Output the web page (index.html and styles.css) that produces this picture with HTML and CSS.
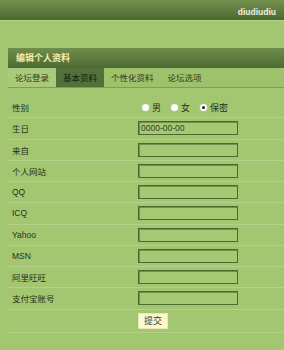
FILE: index.html
```html
<!DOCTYPE html>
<html>
<head>
<meta charset="utf-8">
<link rel="stylesheet" href="styles.css">
</head>
<body>
<div class="topbar"><span class="user">diudiudiu</span></div>
<div class="panel">
  <div class="panel-title">编辑个人资料</div>
  <div class="tabs">
    <span class="tab tab-first">论坛登录</span>
    <span class="tab tab-active">基本资料</span>
    <span class="tab">个性化资料</span>
    <span class="tab">论坛选项</span>
  </div>
  <div class="form">
    <div class="row">
      <div class="label">性别</div>
      <div class="field radios">
        <span class="radio-item"><span class="radio"></span>男</span>
        <span class="radio-item"><span class="radio"></span>女</span>
        <span class="radio-item"><span class="radio checked"></span>保密</span>
      </div>
    </div>
    <div class="row">
      <div class="label">生日</div>
      <div class="field"><span class="input">0000-00-00</span></div>
    </div>
    <div class="row">
      <div class="label">来自</div>
      <div class="field"><span class="input"></span></div>
    </div>
    <div class="row">
      <div class="label">个人网站</div>
      <div class="field"><span class="input"></span></div>
    </div>
    <div class="row">
      <div class="label">QQ</div>
      <div class="field"><span class="input"></span></div>
    </div>
    <div class="row">
      <div class="label">ICQ</div>
      <div class="field"><span class="input"></span></div>
    </div>
    <div class="row">
      <div class="label">Yahoo</div>
      <div class="field"><span class="input"></span></div>
    </div>
    <div class="row">
      <div class="label">MSN</div>
      <div class="field"><span class="input"></span></div>
    </div>
    <div class="row">
      <div class="label">阿里旺旺</div>
      <div class="field"><span class="input"></span></div>
    </div>
    <div class="row">
      <div class="label">支付宝账号</div>
      <div class="field"><span class="input"></span></div>
    </div>
    <div class="row row-submit">
      <div class="label"></div>
      <div class="field"><span class="button">提交</span></div>
    </div>
  </div>
</div>
</body>
</html>
```
FILE: styles.css
```css
html, body {
  margin: 0;
  padding: 0;
}
body {
  width: 284px;
  height: 350px;
  overflow: hidden;
  background: #a3c670;
  font-family: "Liberation Sans", "Noto Sans CJK SC", sans-serif;
  font-size: 9px;
  color: #26311c;
}
.topbar {
  height: 20px;
  border-bottom: 1px solid #b4d488;
  background: linear-gradient(#74924f, #4c6832);
  display: flex;
  align-items: center;
  justify-content: flex-end;
  padding-right: 8px;
}
.user {
  color: #eef4e2;
  font-weight: bold;
  font-size: 8.5px;
  margin-top: 4px;
}
.panel {
  margin: 27px 0 0 8px;
}
.panel-title {
  height: 20px;
  line-height: 20px;
  padding-left: 8px;
  background: linear-gradient(#6f8d4b, #4e6a33);
  color: #f4eeb0;
  font-weight: bold;
  font-size: 9px;
  font-family: "Noto Sans CJK SC", sans-serif;
}
.tabs {
  display: flex;
  height: 19px;
  border-bottom: 1px solid #7f9f58;
  background: #9ec16b;
}
.tab {
  line-height: 19px;
  padding: 0 7px;
  color: #2e3a22;
  font-family: "Noto Sans CJK SC", sans-serif;
  font-size: 8.5px;
}
.tab-first {
  background: #a9c97b;
}
.tab-active {
  background: #52703a;
  color: #15200c;
}
.form {
  padding-top: 9px;
}
.row {
  display: flex;
  align-items: center;
  height: 20.25px;
  border-bottom: 1px solid #b3d189;
}
.row-submit {
  height: 22px;
}
.label {
  width: 126px;
  padding-left: 4px;
  font-family: "Liberation Sans", "Noto Sans CJK SC", sans-serif;
  font-size: 8.5px;
}
.field {
  display: flex;
  align-items: center;
}
.radios {
  padding-left: 4px;
  gap: 10px;
}
.radio-item {
  display: flex;
  align-items: center;
  font-size: 9px;
  font-family: "Noto Sans CJK SC", sans-serif;
}
.radio {
  width: 7px;
  height: 7px;
  border-radius: 50%;
  background: radial-gradient(circle at 60% 60%, #ffffff 50%, #dfe6d4 100%);
  box-shadow: 0 0 0 0.5px #c4cfb6;
  margin-right: 3px;
  position: relative;
}
.radio.checked::after {
  content: "";
  position: absolute;
  left: 2px;
  top: 2px;
  width: 3px;
  height: 3px;
  border-radius: 50%;
  background: #1c1c1c;
}
.input {
  display: block;
  width: 96px;
  height: 12px;
  border: 1px solid #4b6a31;
  box-shadow: inset 1px 1px 0 #6f8f4c;
  background: #a5c872;
  font-size: 8.5px;
  line-height: 12px;
  padding-left: 2px;
  box-sizing: content-box;
  color: #34402a;
}
.button {
  display: block;
  width: 28px;
  height: 14px;
  line-height: 14px;
  text-align: center;
  background: #fdf9cf;
  border: 1px solid #efe7ad;
  color: #3a3a2a;
  font-size: 9px;
  font-family: "Noto Sans CJK SC", sans-serif;
  margin-top: 1px;
}
```
